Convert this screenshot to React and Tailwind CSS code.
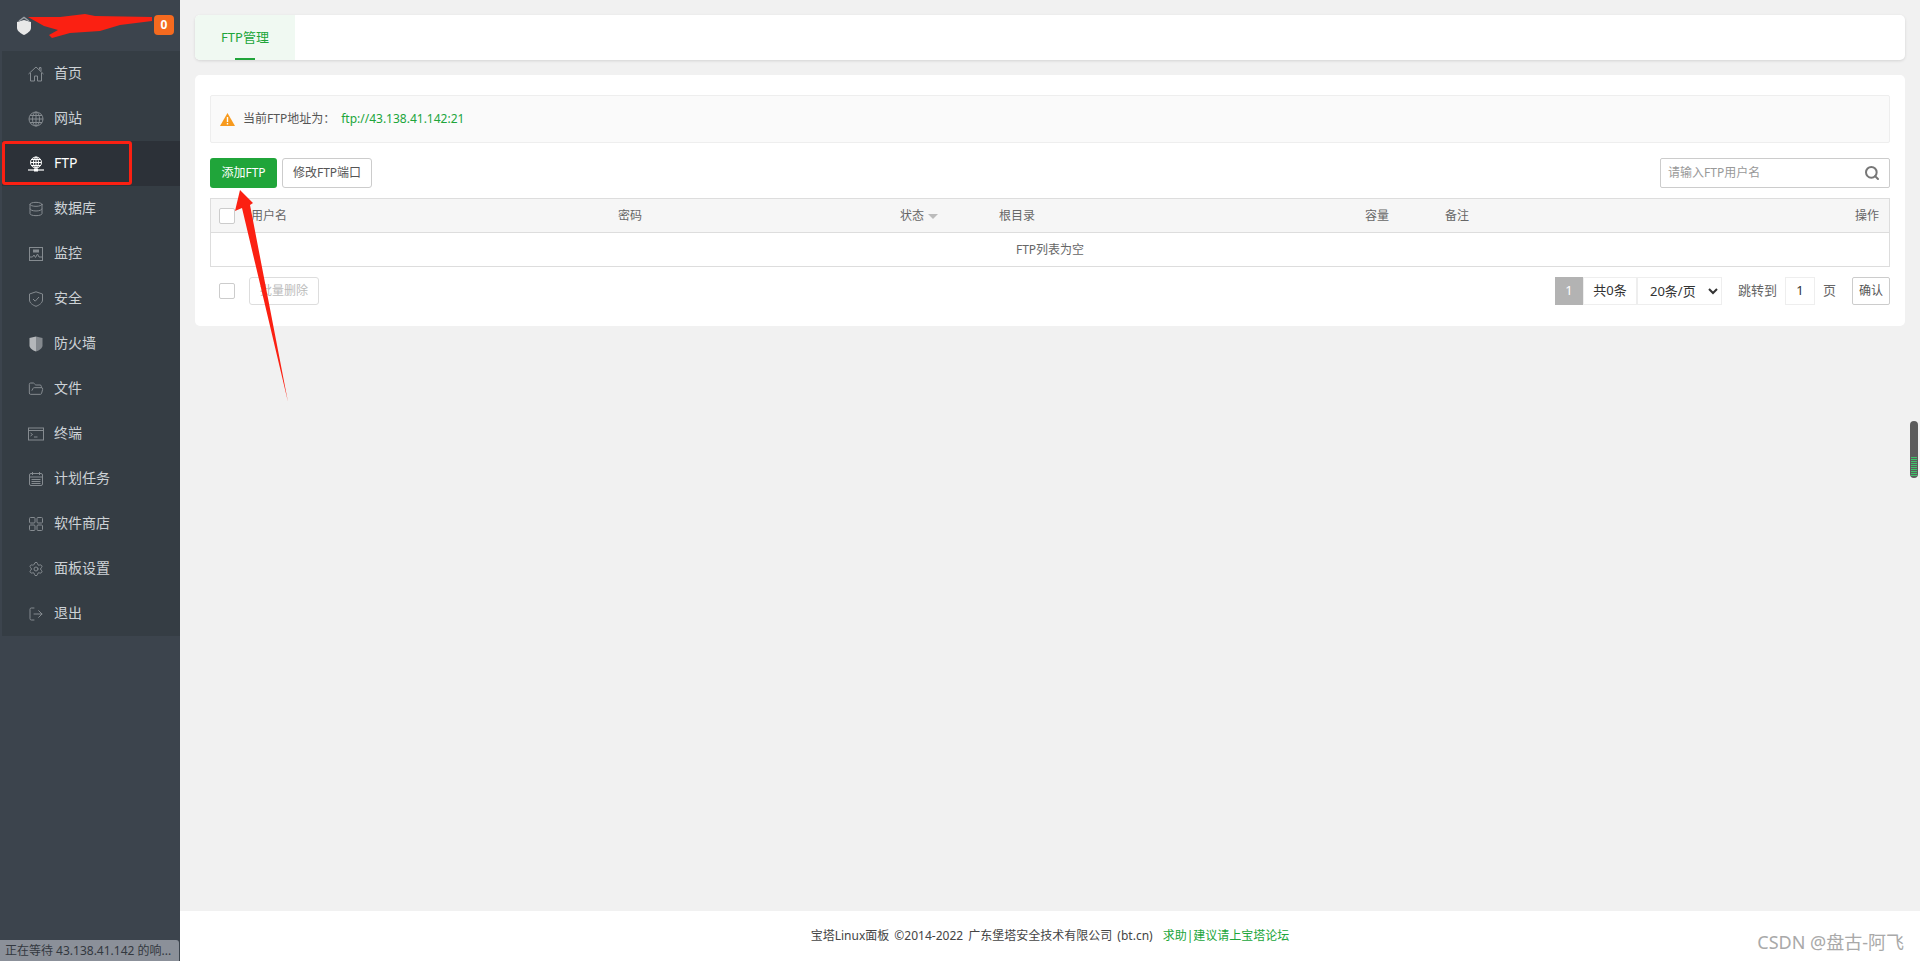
import React from 'react';
import {FolderOpen, Settings, LogOut, Database, Search} from 'lucide-react';

const iconProps = {width: 16, height: 16, viewBox: '0 0 16 16', fill: 'none', stroke: 'currentColor', strokeWidth: 1};

const HomeIcon = () => (
  <svg {...iconProps}>
    <path d="M.5 8 8 1l7.5 7M2.5 7v8h4v-5h3v5h4V7M11.500 3.500V1.500h1.500v3.500" />
  </svg>
);
const GlobeIcon = () => (
  <svg {...iconProps}>
    <circle cx="8" cy="8" r="7" />
    <ellipse cx="8" cy="8" rx="3.500" ry="7" />
    <path d="M1 8h14M2 4.500h12M2 11.500h12M8 1v14" />
  </svg>
);
const FtpIcon = () => (
  <svg {...iconProps}>
    <circle cx="8" cy="6.500" r="5.500" />
    <ellipse cx="8" cy="6.500" rx="2.500" ry="5.500" />
    <path d="M2.500 6.500h11M3.500 3.500h9M3.500 9.500h9M8 1v11" />
    <path d="M0 14h16" strokeWidth="1.200" />
    <rect x="6" y="12.500" width="4" height="3" fill="currentColor" stroke="none" />
  </svg>
);
const MonitorIcon = () => (
  <svg {...iconProps}>
    <rect x="1.500" y="1.500" width="13" height="13" />
    <path d="M1.500 11h3l1.500-2 1.500 2.500L9.500 8l1.500 3h3.500" />
    <rect x="5" y="3.500" width="6" height="3" fill="currentColor" stroke="none" />
  </svg>
);
const ShieldIcon = () => (
  <svg {...iconProps}>
    <path d="M8 .800 14.500 3v6c0 3-3.500 5.300-6.500 6.300C5 14.300 1.500 12 1.500 9V3z" />
    <path d="m5 8 2.200 2.200L11 6" />
  </svg>
);
const FirewallIcon = () => (
  <svg width="16" height="16" viewBox="0 0 16 16">
    <path d="M8 .500 1.500 2v7.500c0 2.500 3 4.800 6.500 6z" fill="#b4b7ba" />
    <path d="M8 .500 14.500 2v7.500c0 2.500-3 4.800-6.500 6z" fill="#84898e" />
  </svg>
);
const TerminalIcon = () => (
  <svg {...iconProps}>
    <rect x=".500" y="2" width="15" height="12" />
    <path d="M.500 4.500h15M2.500 7l2 1.500-2 1.500M6 11h3.500" />
  </svg>
);
const CalendarIcon = () => (
  <svg {...iconProps}>
    <rect x="1.500" y="2.500" width="13" height="12" rx="1.500" />
    <path d="M1.500 6h13M4.500 1v3M11.500 1v3M3.500 8.500h9M3.500 10.500h9M3.500 12.500h9" />
  </svg>
);
const AppsIcon = () => (
  <svg {...iconProps}>
    <rect x="1.500" y="1.500" width="5.500" height="5.500" rx="1" />
    <rect x="9" y="1.500" width="5.500" height="5.500" rx="1" />
    <rect x="1.500" y="9" width="5.500" height="5.500" rx="1" />
    <rect x="9" y="9" width="5.500" height="5.500" rx="1" />
  </svg>
);

const navItems = [
  {label: '首页', icon: <HomeIcon />},
  {label: '网站', icon: <GlobeIcon />},
  {label: 'FTP', icon: <FtpIcon />, active: true},
  {label: '数据库', icon: <Database size={16} strokeWidth={1.5} />},
  {label: '监控', icon: <MonitorIcon />},
  {label: '安全', icon: <ShieldIcon />},
  {label: '防火墙', icon: <FirewallIcon />},
  {label: '文件', icon: <FolderOpen size={16} strokeWidth={1.5} />},
  {label: '终端', icon: <TerminalIcon />},
  {label: '计划任务', icon: <CalendarIcon />},
  {label: '软件商店', icon: <AppsIcon />},
  {label: '面板设置', icon: <Settings size={16} strokeWidth={1.5} />},
  {label: '退出', icon: <LogOut size={16} strokeWidth={1.5} />},
];

const columns = [
  {label: '用户名', className: 'w-[367px]'},
  {label: '密码', className: 'w-[282px]'},
  {label: '状态', className: 'w-[99px]', sort: true},
  {label: '根目录', className: 'w-[366px]'},
  {label: '容量', className: 'w-[80px]'},
  {label: '备注', className: 'flex-1'},
  {label: '操作', className: 'w-[100px] justify-end'},
];

const Checkbox = () => (
  <span className="block w-4 h-4 bg-white border border-[#ccc] rounded-[2px]" />
);

const Sidebar = () => (
  <aside className="w-[180px] shrink-0 bg-[#3c444d] flex flex-col">
    <div className="h-[51px] relative flex items-center pl-4">
      <svg width="16" height="20" viewBox="0 0 16 20">
        <path d="M8 4 15 6v6c0 3-4 5.500-7 7-3-1.500-7-4-7-7V6z" fill="#e8e8e8" />
        <path d="M3 5 8 1.500 13 5" fill="none" stroke="#9aa0a6" strokeWidth="1.500" />
      </svg>
      <span className="absolute right-[6px] top-[15px] w-5 h-5 rounded-[4px] bg-[#f56a1f] text-white text-xs font-bold flex items-center justify-center">0</span>
    </div>
    <nav className="border-l-2 border-[#3c444d]">
      {navItems.map(item => (
        <div
          key={item.label}
          className={`h-[45px] flex items-center pl-[26px] gap-[10px] text-sm ${item.active ? 'bg-[#2c3138] text-white' : 'bg-[#353d44] text-[#cdd2d6]'}`}
        >
          <span className={`w-4 h-4 flex items-center justify-center ${item.active ? 'text-white' : 'text-[#858b90]'}`}>{item.icon}</span>
          <span className="pb-[2px]">{item.label}</span>
        </div>
      ))}
    </nav>
  </aside>
);

const FtpTable = () => (
  <div className="mt-[10px] border border-[#ddd] text-xs text-[#666]">
    <div className="h-[34px] bg-[#f6f6f6] border-b border-[#ddd] flex items-center">
      <div className="w-[30px] pl-2 shrink-0"><Checkbox /></div>
      {columns.map(col => (
        <div key={col.label} className={`${col.className} px-[10px] flex items-center`}>
          {col.label}
          {col.sort && <span className="ml-1 w-0 h-0 border-x-[5px] border-x-transparent border-t-[5px] border-t-[#bbb] mt-[2px]" />}
        </div>
      ))}
    </div>
    <div className="h-[33px] flex items-center justify-center">FTP列表为空</div>
  </div>
);

const Pager = () => (
  <div className="flex items-center h-7 text-[13px] text-[#333]">
    <span className="w-7 h-7 bg-[#b3b3b3] text-white flex items-center justify-center">1</span>
    <span className="w-[54px] h-7 border border-[#eee] flex items-center justify-center">共0条</span>
    <select defaultValue="20" className="w-[85px] h-7 border border-[#eee] bg-white pl-2 text-[13px] text-[#333]">
      <option value="20">20条/页</option>
    </select>
    <span className="ml-4 text-[#666]">跳转到</span>
    <span className="ml-2 w-[30px] h-7 border border-[#eee] flex items-center justify-center">1</span>
    <span className="ml-2 text-[#666]">页</span>
    <button className="ml-4 w-[38px] h-7 border border-[#ccc] rounded-[2px] text-[#555] text-xs">确认</button>
  </div>
);

const Annotations = () => (
  <>
    <div className="absolute left-[2px] top-[141px] w-[130px] h-[44px] border-[3px] border-[#fb2012] rounded-[3px]" />
    <svg className="absolute left-0 top-0 pointer-events-none" width="300" height="420" viewBox="0 0 300 420">
      <path d="M240 190 253 203 250 205 288 402 242 208 235 211z" fill="#fb2012" />
      <path d="M28 17 60 17 85 14 95 16 152 17V21L120 25 100 31 70 33 52 38 49 35 58 30 44 26z" fill="#fb2012" />
    </svg>
  </>
);

const App = () => (
  <div className="relative w-[1920px] h-[961px] overflow-hidden flex bg-[#f1f1f1] font-['Noto_Sans','Noto_Sans_CJK_SC',sans-serif]">
    <Sidebar />
    <main className="flex-1 flex flex-col min-w-0">
      <div className="flex-1 px-[15px] pt-[15px]">
        <div className="h-[45px] bg-white rounded-[5px] shadow-[0_1px_3px_rgba(0,0,0,0.12)] flex overflow-hidden">
          <div className="relative w-[100px] bg-[#f0f9f2] text-[#20a53a] text-[13px] flex items-center justify-center">
            FTP管理
            <span className="absolute bottom-0 left-10 w-5 h-[2px] bg-[#20a53a]" />
          </div>
        </div>
        <section className="mt-[15px] h-[251px] bg-white rounded-[5px] px-[15px] pt-5">
          <div className="h-[48px] bg-[#fafafa] border border-[#eee] rounded-[2px] flex items-center pl-[9px] pr-[10px] text-xs text-[#555]">
            <svg width="15" height="13" viewBox="0 0 15 13">
              <path d="M7.500 0 15 13H0z" fill="#f79a1e" />
              <path d="M6.800 4h1.400v5H6.800zM6.800 10h1.400v1.500H6.800z" fill="#fff" />
            </svg>
            <span className="ml-[8px]">当前FTP地址为：</span>
            <span className="ml-[6px] text-[#20a53a]">ftp://43.138.41.142:21</span>
          </div>
          <div className="mt-[15px] flex items-center">
            <button className="w-[67px] h-[30px] bg-[#20a53a] rounded-[3px] text-white text-xs">添加FTP</button>
            <button className="ml-[5px] w-[90px] h-[30px] bg-white border border-[#ccc] rounded-[3px] text-[#555] text-xs">修改FTP端口</button>
            <div className="ml-auto w-[230px] h-[30px] border border-[#ccc] rounded-[2px] flex items-center justify-between pl-[7px] pr-[9px] text-xs text-[#999]">
              <span>请输入FTP用户名</span>
              <Search size={16} strokeWidth={3} className="text-[#777]" />
            </div>
          </div>
          <FtpTable />
          <div className="mt-[10px] flex items-center justify-between">
            <div className="flex items-center pl-[9px]">
              <Checkbox />
              <button className="ml-[14px] w-[70px] h-7 border border-[#ddd] rounded-[3px] text-xs text-[#bbb]">批量删除</button>
            </div>
            <Pager />
          </div>
        </section>
      </div>
      <footer className="h-[50px] bg-white flex items-center justify-center text-xs text-[#444] [word-spacing:2px]">
        宝塔Linux面板 ©2014-2022 广东堡塔安全技术有限公司 (bt.cn)
        <span className="ml-[10px] text-[#20a53a]">求助|建议请上宝塔论坛</span>
      </footer>
    </main>
    <Annotations />
    <div className="absolute left-0 bottom-0 w-[179px] h-[21px] bg-[#8b9099] rounded-tr-[3px] flex items-center pl-[5px] text-xs text-[#33383f] whitespace-nowrap">
      正在等待 43.138.41.142 的响...
    </div>
    <div className="absolute left-[1910px] top-[421px] w-2 h-[57px] rounded-full bg-[#5c5c5c] flex flex-col justify-end items-center gap-px pb-[2px] overflow-hidden">
      <span className="w-[6px] h-[19px] bg-[repeating-linear-gradient(to_bottom,#3fc46a_0,#3fc46a_1px,transparent_1px,transparent_2px)]" />
    </div>
    <div className="absolute right-4 bottom-[5px] text-[#a9a9a9] text-lg">CSDN @盘古-阿飞</div>
  </div>
);

export default App;
